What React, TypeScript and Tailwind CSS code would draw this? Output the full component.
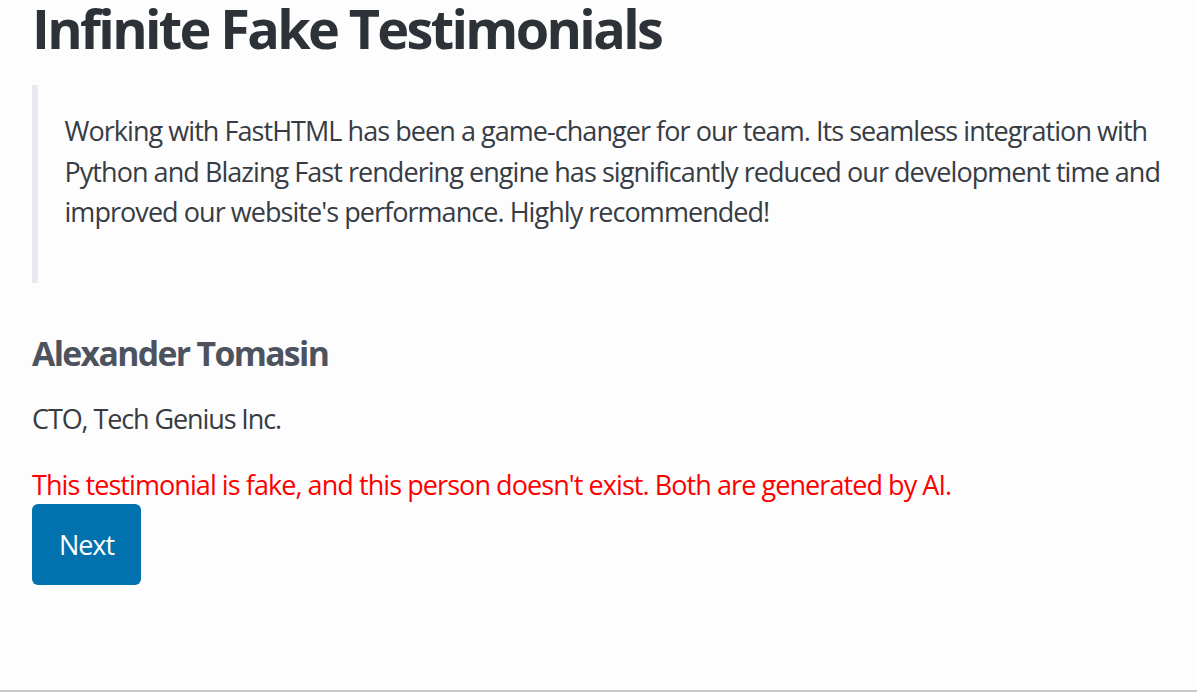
import React from "react";

export default function App() {
  return (
    <div className="h-[692px] bg-[#fdfdfd] border-b-2 border-[#c8c8c8] font-['Open_Sans',sans-serif] text-[#373c44] overflow-hidden">
      <main className="px-[32px]">
        <h1 className="text-[54px] font-bold leading-[56px] tracking-[-2.65px] text-[#2d3138] mb-[29px]">
          Infinite Fake Testimonials
        </h1>
        <blockquote className="border-l-[6.5px] border-[#e7eaf0] pl-[26.5px] pt-[26px] pb-[50px] text-[27px] leading-[40.5px] tracking-[-0.95px] whitespace-nowrap">
          <p>
            Working with FastHTML has been a game-changer for our team. Its seamless integration with
            <br />
            Python and Blazing Fast rendering engine has significantly reduced our development time and
            <br />
            improved our website's performance. Highly recommended!
          </p>
        </blockquote>
        <h4 className="mt-[51px] text-[33.75px] font-bold leading-[38.25px] tracking-[-1.65px] text-[#4d535e]">
          Alexander Tomasin
        </h4>
        <p className="mt-[27px] text-[27px] leading-[40.5px] tracking-[-1.1px]">CTO, Tech Genius Inc.</p>
        <p className="mt-[26px] text-[27px] leading-[39px] tracking-[-0.93px] text-[#ff0000]">
          This testimonial is fake, and this person doesn't exist. Both are generated by AI.
        </p>
        <button className="block w-[109px] py-[20.25px] rounded-[6px] bg-[#0172ad] text-white text-[27px] leading-[40.5px] tracking-[-1px] text-center">
          Next
        </button>
      </main>
    </div>
  );
}
